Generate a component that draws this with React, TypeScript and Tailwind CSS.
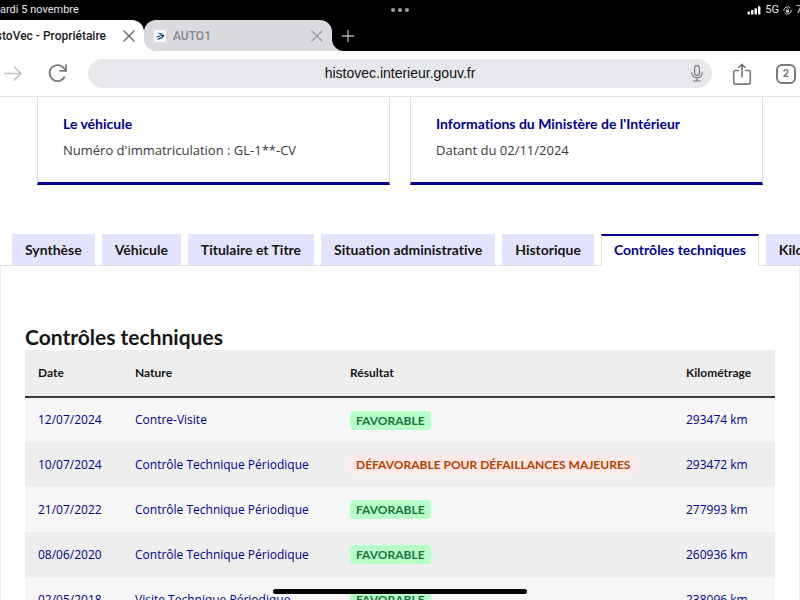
import { useState } from 'react'

const vehicleTabs = [
  'Synthèse',
  'Véhicule',
  'Titulaire et Titre',
  'Situation administrative',
  'Historique',
  'Contrôles techniques',
  'Kilométrage',
]

const inspections = [
  { date: '12/07/2024', nature: 'Contre-Visite', result: 'Favorable', ok: true, km: 293474 },
  { date: '10/07/2024', nature: 'Contrôle Technique Périodique', result: 'Défavorable pour défaillances majeures', ok: false, km: 293472 },
  { date: '21/07/2022', nature: 'Contrôle Technique Périodique', result: 'Favorable', ok: true, km: 277993 },
  { date: '08/06/2020', nature: 'Contrôle Technique Périodique', result: 'Favorable', ok: true, km: 260936 },
  { date: '02/05/2018', nature: 'Visite Technique Périodique', result: 'Favorable', ok: true, km: 238096 },
]

function CloseIcon() {
  return (
    <svg width="12" height="12" viewBox="0 0 12 12" fill="none" stroke="currentColor" strokeWidth="1.3" strokeLinecap="round">
      <path d="M1 1l10 10M11 1L1 11" />
    </svg>
  )
}

function StatusBar() {
  return (
    <div className="grid h-5 grid-cols-3 items-center text-[11px] text-gray-200">
      <span className="whitespace-nowrap font-[Roboto,sans-serif]">ardi 5 novembre</span>
      <button aria-label="Multitâche" className="flex justify-center gap-[3px]">
        <i className="size-1 rounded-full bg-[#a0a0a0]" />
        <i className="size-1 rounded-full bg-[#a0a0a0]" />
        <i className="size-1 rounded-full bg-[#a0a0a0]" />
      </button>
      <div className="flex items-center justify-end gap-1 overflow-hidden whitespace-nowrap font-[Roboto,sans-serif]">
        <svg width="14" height="9" viewBox="0 0 14 9" fill="#fff">
          <rect x="0.5" y="5.5" width="2.4" height="3" rx="0.6" />
          <rect x="4" y="4" width="2.4" height="4.5" rx="0.6" />
          <rect x="7.5" y="2.3" width="2.4" height="6.2" rx="0.6" />
          <rect x="11" y="0.3" width="2.4" height="8.2" rx="0.6" />
        </svg>
        <span>5G</span>
        <svg width="9" height="9" viewBox="0 0 10 10" fill="none" stroke="#e5e7eb" strokeWidth="1">
          <path d="M1 5.600a4 4 0 0 1 7.200-3M9 4.400a4 4 0 0 1-7.200 3" />
          <rect x="3.3" y="4.6" width="3.4" height="2.5" rx="0.4" fill="#e5e7eb" stroke="none" />
          <path d="M4 4.7v-.8a1 1 0 0 1 2 0v.8" strokeWidth="0.7" />
        </svg>
        <span className="w-1">7</span>
      </div>
    </div>
  )
}

function BrowserTabs() {
  return (
    <div className="flex h-[31px] text-xs">
      <div className="flex w-36 items-center justify-end gap-[17px] rounded-tr-xl bg-white pr-[9px]">
        <span className="whitespace-nowrap font-[Roboto,sans-serif] font-medium text-[#1c1c1e]">stoVec - Propriétaire</span>
        <button aria-label="Fermer l'onglet" className="text-[#5f6368]">
          <CloseIcon />
        </button>
      </div>
      <div className="w-[188px] bg-linear-to-t from-white from-50% to-black to-50%">
        <div className="flex h-full items-center gap-[7px] rounded-t-xl rounded-bl-xl bg-[#dadbdf] pl-2.5 pr-[9px] text-[#85878c]">
          <svg width="12" height="12" viewBox="0 0 12 12">
            <rect width="12" height="12" rx="2" fill="#fff" />
            <path d="M3 2.200l4.800 1 2.400 1.600-3.600-.2z" fill="#2a6aa8" />
            <path d="M4.200 4.400l6 .5-1.300 3.100-1.300.6.500-2.200z" fill="#17355f" />
            <path d="M2.600 5.900l4.300-.4-1.400 1.600-2.900.6z" fill="#2a6aa8" />
            <path d="M2.800 10l2.300-2.300 3-.8-1.200 2z" fill="#17457f" />
          </svg>
          <span className="flex-1 font-[Roboto,sans-serif] font-medium">AUTO1</span>
          <button aria-label="Fermer l'onglet" className="text-[#9a9ca1]">
            <CloseIcon />
          </button>
        </div>
      </div>
      <div className="flex-1 bg-[#dadbdf]">
        <div className="flex h-full items-center rounded-bl-xl bg-black pl-2.5">
          <button aria-label="Nouvel onglet" className="text-[#b0b2b5]">
            <svg width="12" height="12" viewBox="0 0 12 12" fill="none" stroke="currentColor" strokeWidth="1.3">
              <path d="M6 0v12M0 6h12" />
            </svg>
          </button>
        </div>
      </div>
    </div>
  )
}

function Toolbar() {
  return (
    <div className="flex h-[46px] items-center border-b border-[#e4e4e6] bg-white px-1 text-[#77797d]">
      <button aria-label="Suivant" className="text-[#c0c2c5]">
        <svg width="18" height="16" viewBox="0 0 18 16" fill="none" stroke="currentColor" strokeWidth="1.6" strokeLinecap="round" strokeLinejoin="round">
          <path d="M1 7.500h16M10.500 1L17 7.500 10.500 14" />
        </svg>
      </button>
      <button aria-label="Recharger" className="ml-[26px]">
        <svg width="20" height="20" viewBox="0 0 20 20" fill="none" stroke="currentColor" strokeWidth="1.8">
          <path d="M16.800 12.500A8 8 0 1 1 15.800 4L18 6.400" />
          <path d="M18 .5v6.400H11.500" />
        </svg>
      </button>
      <div className="ml-5 flex h-[29px] flex-1 items-center rounded-full bg-[#e6e8eb] pl-[22px] pr-2">
        <input
          type="text"
          aria-label="Adresse"
          defaultValue="histovec.interieur.gouv.fr"
          className="min-w-0 flex-1 bg-transparent pb-0.5 text-center font-['Liberation_Sans',Arial,sans-serif] text-sm text-[#111214] outline-none"
        />
        <button aria-label="Recherche vocale">
          <svg width="14" height="17" viewBox="0 0 14 17" fill="none" stroke="currentColor" strokeWidth="1.2" strokeLinecap="round">
            <rect x="4.600" y="0.700" width="4.800" height="9.600" rx="2.400" />
            <path d="M1.800 7.500c0 7 10.400 7 10.400 0M7 12.800v3M3.500 16h7" />
          </svg>
        </button>
      </div>
      <button aria-label="Partager" className="ml-5">
        <svg width="20" height="24" viewBox="0 0 20 24" fill="none" stroke="currentColor" strokeWidth="1.600" strokeLinecap="round" strokeLinejoin="round">
          <path d="M6.500 8.500H3.500a1.800 1.800 0 0 0-1.800 1.800v10a1.800 1.800 0 0 0 1.800 1.800h13a1.800 1.800 0 0 0 1.800-1.800v-10a1.800 1.800 0 0 0-1.800-1.800h-3M10 15V2.500M6.800 5.500L10 2.300l3.200 3.200" />
        </svg>
      </button>
      <button aria-label="Onglets ouverts" className="ml-6 flex size-5 items-center justify-center rounded-md border-2 border-[#77797d] text-[10px] font-bold">
        2
      </button>
    </div>
  )
}

function InfoCard({ title, text }: { title: string; text: string }) {
  return (
    <a href="#vehicule" className="flex-1 border-x border-b-[3px] border-x-[#dddddd] border-b-[#000091] px-[25px] pb-5 pt-[15px]">
      <h2 className="font-[Lato,sans-serif] text-sm font-bold leading-6 text-[#000091]">{title}</h2>
      <p className="mt-0.5 text-[13px] leading-6 text-[#3a3a3a]">{text}</p>
    </a>
  )
}

export default function App() {
  const [active, setActive] = useState('Contrôles techniques')

  return (
    <div className="relative flex h-screen flex-col overflow-hidden bg-white font-['Open_Sans','Noto_Sans',sans-serif] [font-variant-ligatures:none]">
      <header className="shrink-0 bg-black font-[Inter,'Liberation_Sans',sans-serif]">
        <StatusBar />
        <BrowserTabs />
        <Toolbar />
      </header>

      <main className="min-h-0 flex-1 overflow-hidden">
        <section className="flex gap-5 px-[37px]">
          <InfoCard title="Le véhicule" text="Numéro d'immatriculation : GL-1**-CV" />
          <InfoCard title="Informations du Ministère de l'Intérieur" text="Datant du 02/11/2024" />
        </section>

        <div role="tablist" className="mt-[49px] flex gap-[7px] overflow-hidden pl-3 font-[Lato,sans-serif] text-sm font-bold shadow-[inset_0_-1px_0_#dddddd]">
          {vehicleTabs.map((tab) => (
            <button
              key={tab}
              role="tab"
              aria-selected={tab === active}
              onClick={() => setActive(tab)}
              className={
                tab === active
                  ? 'h-8 shrink-0 whitespace-nowrap border-x border-t-2 border-x-[#dddddd] border-t-[#000091] bg-white px-3 pb-0.5 text-[#000091]'
                  : 'mb-px h-[31px] shrink-0 whitespace-nowrap bg-[#e3e3fd] px-[13px] text-[#161616]'
              }
            >
              {tab}
            </button>
          ))}
        </div>

        <section role="tabpanel" className="border-x border-[#eeeeee] px-6 pt-[58px]">
          <h3 className="font-[Lato,sans-serif] text-[21px] font-bold leading-[26px] text-[#161616]">Contrôles techniques</h3>
          <table className="w-full table-fixed text-left text-xs">
            <thead className="border-b-2 border-[#3a3a3a] bg-[#eeeeee] font-[Lato,sans-serif] text-[#161616]">
              <tr className="h-[47px]">
                <th className="w-[97px] pl-[13px]">Date</th>
                <th className="w-[215px] pl-[13px]">Nature</th>
                <th className="w-[336px] pl-[13px]">Résultat</th>
                <th className="pl-[13px]">Kilométrage</th>
              </tr>
            </thead>
            <tbody className="text-[#000091]">
              {inspections.map((row) => (
                <tr key={row.date} className="h-[45px] whitespace-nowrap odd:bg-[#f6f6f6] even:bg-[#eeeeee]">
                  <td className="pl-[13px]">{row.date}</td>
                  <td className="pl-[13px]">{row.nature}</td>
                  <td className="pl-[13px] font-[Lato,sans-serif]">
                    <span
                      className={
                        row.ok
                          ? 'inline-block rounded-sm bg-[#b8fec9] px-1.5 font-bold uppercase leading-[19px] text-[#18753c]'
                          : 'inline-block rounded-sm bg-[#ffe9e6] px-1.5 font-bold uppercase leading-[19px] text-[#b34000]'
                      }
                    >
                      {row.result}
                    </span>
                  </td>
                  <td className="pl-[13px]">{row.km} km</td>
                </tr>
              ))}
            </tbody>
          </table>
        </section>
      </main>

      {/* Home indicator */}
      <div className="absolute bottom-1.5 left-1/2 h-[5px] w-[254px] -translate-x-1/2 rounded-full bg-black" />
    </div>
  )
}
